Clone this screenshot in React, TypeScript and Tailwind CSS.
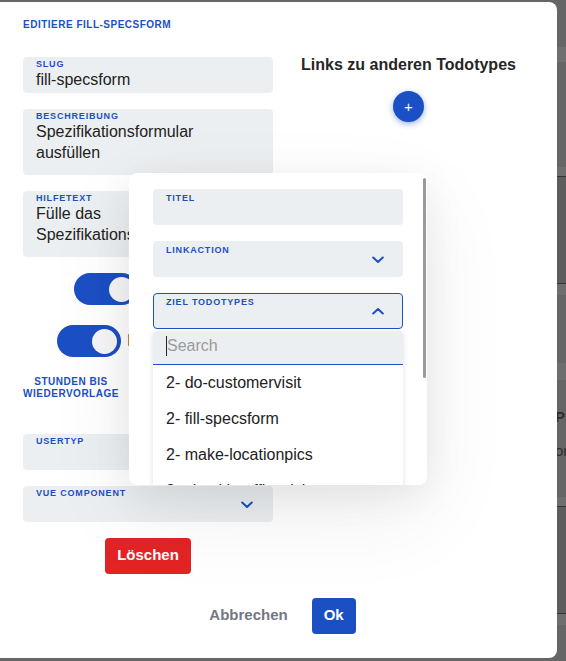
import type { ReactNode } from "react";

const labelCls = "block text-[9px] font-bold uppercase leading-[10px] tracking-[0.09em] text-[#1b4fc4]";

const Chevron = ({ up = false }: { up?: boolean }) => (
  <svg width="12" height="8" viewBox="0 0 12 8" className={up ? "rotate-180" : ""}>
    <path d="M1.2 1.5 L6 6 L10.8 1.5" fill="none" stroke="#1b4fc4" strokeWidth="2" strokeLinecap="round" strokeLinejoin="round" />
  </svg>
);

interface FieldProps {
  label: string;
  height?: string;
  select?: boolean;
  children?: ReactNode;
}

const Field = ({ label, height = "h-[36px]", select, children }: FieldProps) => (
  <div className={`relative ${height} rounded-[4px] bg-[#eceff1] px-[13px] pt-[2px]`}>
    <span className={labelCls}>{label}</span>
    {children && <div className="text-[16px] leading-[21px] text-[#222]">{children}</div>}
    {select && (
      <span className="absolute right-[20px] top-[15px]">
        <Chevron />
      </span>
    )}
  </div>
);

const Toggle = () => (
  <div className="flex h-[32px] w-[64px] shrink-0 items-center justify-end rounded-full bg-[#1b4fc4] p-[4px]">
    <div className="h-[25px] w-[25px] rounded-full bg-[#f7f7f7]" />
  </div>
);

const Backdrop = () => (
  <div className="flex h-full w-full flex-col text-[#2e2e2e]">
    <div className="h-[47px] bg-[#666]" />
    <div className="h-[15px] bg-[#707070]" />
    <div className="h-[105px] bg-[#666]" />
    <div className="h-[10px] border-b border-[#333] bg-[#6e6e6e]" />
    <div className="h-[107px] border-b border-[#333] bg-[#5d5d5d]" />
    <div className="h-[11px] bg-[#6e6e6e]" />
    <div className="h-[68px] bg-[#666]" />
    <div className="h-[17px] bg-[#6e6e6e]" />
    <div className="flex h-[117px] flex-col bg-[#666] pl-[555px] pt-[28px] text-[15px]">
      <span className="font-bold leading-[18px]">PI</span>
      <span className="mt-[16px] leading-[18px]">or</span>
    </div>
    <div className="h-[10px] border-b border-[#333] bg-[#6e6e6e]" />
    <div className="h-[107px] border-b border-[#333] bg-[#5d5d5d]" />
    <div className="h-[11px] bg-[#6e6e6e]" />
    <div className="flex-1 bg-[#666]" />
  </div>
);

export default function App() {
  return (
    <div className="relative h-[661px] w-[566px] overflow-hidden bg-[#666] font-['Liberation_Sans',Arial,sans-serif]">
      <Backdrop />

      <div className="absolute left-0 top-[2px] h-[656px] w-[557px] rounded-r-[8px] bg-white">
        <div className="flex flex-col px-[23px] pt-[17px]">
          <div className="grid grid-cols-[250px_1fr] gap-x-[10px]">
            <div className="flex flex-col">
              <h1 className="text-[10px] font-bold uppercase leading-[12px] tracking-[0.05em] text-[#1b4fc4]">
                Editiere fill-specsform
              </h1>
              <div className="mt-[26px]">
                <Field label="Slug">fill-specsform</Field>
              </div>
              <div className="mt-[16px]">
                <Field label="Beschreibung" height="h-[66px]">
                  Spezifikationsformular
                  <br />
                  ausfüllen
                </Field>
              </div>
              <div className="mt-[16px]">
                <Field label="Hilfetext" height="h-[66px]">
                  Fülle das
                  <br />
                  Spezifikationsformular aus
                </Field>
              </div>
              <div className="mt-[16px] flex items-center justify-center gap-[6px]">
                <Toggle />
                <span className="w-[78px] whitespace-nowrap text-[16px] text-[#222]">Aktiv</span>
              </div>
              <div className="mt-[20px] flex items-center justify-center gap-[6px]">
                <Toggle />
                <span className="w-[112px] whitespace-nowrap text-[16px] text-[#222]">Ist Abschluss</span>
              </div>
              <div className="mt-[19px] flex h-[42px] items-start">
                <span className="w-[96px] text-center text-[10px] font-bold uppercase leading-[12px] tracking-[0.05em] text-[#1b4fc4]">
                  Stunden bis Wiedervorlage
                </span>
              </div>
              <div className="mt-[16px]">
                <Field label="Usertyp" select />
              </div>
              <div className="mt-[16px]">
                <Field label="Vue Component" select />
              </div>
              <button className="mx-auto mt-[16px] h-[36px] w-[86px] rounded-[4px] bg-[#e32424] pb-[2px] text-[15px] font-bold text-white">
                Löschen
              </button>
            </div>

            <div className="flex flex-col items-center pt-[36px]">
              <h2 className="text-[16px] font-bold leading-[20px] text-[#262626]">Links zu anderen Todotypes</h2>
              <button className="mt-[16px] flex h-[31px] w-[31px] items-center justify-center rounded-full bg-[#1b4fc4] text-[15px] leading-none text-white shadow-[0_2px_6px_rgba(27,79,196,0.45)]">
                +
              </button>
            </div>
          </div>

          <div className="mt-[24px] flex justify-center gap-[16px]">
            <button className="h-[36px] px-[8px] pb-[2px] text-[15px] font-bold text-[#737884]">Abbrechen</button>
            <button className="h-[36px] w-[44px] rounded-[4px] bg-[#1b4fc4] pb-[2px] text-[15px] font-bold text-white">Ok</button>
          </div>
        </div>

        <div className="absolute left-[129px] top-[171px] h-[312px] w-[298px] overflow-hidden rounded-[8px] bg-white shadow-[0_10px_40px_rgba(0,0,0,0.07),0_30px_90px_rgba(0,0,0,0.07)]">
          <div className="absolute right-[1px] top-[5px] h-[200px] w-[3px] rounded-full bg-[#9a9a9a]" />
          <div className="flex flex-col px-[24px] pt-[16px]">
            <div className="h-[36px] rounded-[4px] bg-[#eceff1] px-[13px] pt-[4px]">
              <span className={labelCls}>Titel</span>
            </div>
            <div className="relative mt-[16px] h-[36px] rounded-[4px] bg-[#eceff1] px-[13px] pt-[4px]">
              <span className={labelCls}>Linkaction</span>
              <span className="absolute right-[19px] top-[15px]">
                <Chevron />
              </span>
            </div>
            <div className="relative mt-[16px] h-[36px] rounded-[4px] border border-[#1b4fc4] bg-[#eceff1] px-[12px] pt-[3px]">
              <span className={labelCls}>Ziel Todotypes</span>
              <span className="absolute right-[18px] top-[13px]">
                <Chevron up />
              </span>
            </div>
            <div className="mt-[2px] bg-white shadow-[0_2px_6px_rgba(0,0,0,0.12)]">
              <div className="flex h-[34px] items-center rounded-t-[4px] border-b border-[#1b4fc4] bg-[#eceff1] px-[13px] pb-[3px]">
                <span className="h-[20px] w-px bg-[#222]" />
                <span className="text-[16px] text-[#9b9b9b]">Search</span>
              </div>
              {["2- do-customervisit", "2- fill-specsform", "2- make-locationpics", "2- checkin-officevisit"].map((t) => (
                <div key={t} className="flex h-[36px] items-center px-[13px] text-[16px] text-[#222]">
                  {t}
                </div>
              ))}
            </div>
          </div>
        </div>
      </div>
    </div>
  );
}
